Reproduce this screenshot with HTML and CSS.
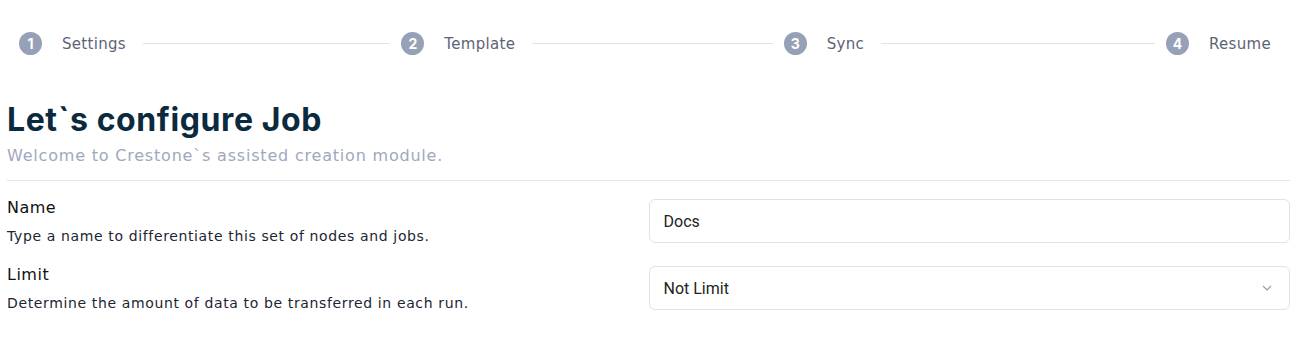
FILE: index.html
```html
<!DOCTYPE html>
<html>
<head>
  <title>Create Job</title>
  <link rel="stylesheet" href="styles.css">
</head>
<body>
  <div class="page">
    <!-- wizard steps -->
    <div class="steps">
      <div class="step">
        <span class="step-num">1</span>
        <span class="step-label">Settings</span>
        <span class="step-line"></span>
      </div>
      <div class="step">
        <span class="step-num">2</span>
        <span class="step-label">Template</span>
        <span class="step-line"></span>
      </div>
      <div class="step">
        <span class="step-num">3</span>
        <span class="step-label">Sync</span>
        <span class="step-line"></span>
      </div>
      <div class="step step-last">
        <span class="step-num">4</span>
        <span class="step-label">Resume</span>
      </div>
    </div>

    <div class="intro">
      <h1 class="title">Let`s configure Job</h1>
      <p class="subtitle">Welcome to Crestone`s assisted creation module.</p>
    </div>

    <div class="form">
      <div class="form-row">
        <div class="field-info">
          <div class="field-label">Name</div>
          <div class="field-desc">Type a name to differentiate this set of nodes and jobs.</div>
        </div>
        <input type="text" class="form-input" value="Docs">
      </div>
      <div class="form-row">
        <div class="field-info">
          <div class="field-label">Limit</div>
          <div class="field-desc">Determine the amount of data to be transferred in each run.</div>
        </div>
        <div class="form-select">
          <span>Not Limit</span>
          <svg class="chevron" width="10" height="6" viewBox="0 0 10 6">
            <path d="M1 1 L5 5 L9 1" fill="none" stroke="#9a9a9a" stroke-width="1.1"/>
          </svg>
        </div>
      </div>
    </div>
  </div>
</body>
</html>
```

FILE: styles.css
```css
/* Job creation wizard */
body {
  margin: 0;
  font-family: "DejaVu Sans", Inter, sans-serif;
  background-color: #ffffff;
  color: #111111;
}
.page {
  padding: 32px 11px 0 7px;
}
.steps {
  display: flex;
  align-items: center;
  padding: 0 19px 0 12px;
}
.step {
  flex: 1;
  display: flex;
  align-items: center;
}
.step-last {
  flex: none;
}
.step-num {
  width: 23px;
  height: 23px;
  border-radius: 50%;
  background-color: #96a1b8;
  color: #ffffff;
  font-family: Inter, sans-serif;
  font-size: 14px;
  font-weight: 700;
  display: flex;
  align-items: center;
  justify-content: center;
}
.step-label {
  margin-left: 20px;
  font-size: 15px;
  letter-spacing: 0.3px;
  color: #5d6377;
}
.step-line {
  flex: 1;
  height: 1px;
  background-color: #e3e3e3;
  margin: 0 11px 0 17px;
}
.intro {
  margin-top: 45px;
  padding-bottom: 12px;
  border-bottom: 1px solid #e4e4e4;
}
.title {
  margin: 0;
  font-family: Inter, sans-serif;
  font-size: 32px;
  font-weight: 700;
  letter-spacing: 0.6px;
  color: #0b2a3e;
  line-height: 40px;
}
.subtitle {
  margin: 4px 0 0 0;
  font-size: 16px;
  letter-spacing: 0.8px;
  color: #a0a8be;
  line-height: 24px;
}
.form {
  padding-top: 15px;
  display: flex;
  flex-direction: column;
  gap: 16px;
}
.form-row {
  display: grid;
  grid-template-columns: 1fr 1fr;
  align-items: start;
}
.field-label {
  font-size: 16px;
  letter-spacing: 0.5px;
  line-height: 24px;
  color: #111111;
}
.field-desc {
  margin-top: 6px;
  font-size: 14px;
  letter-spacing: 0.63px;
  line-height: 21px;
  color: #1c2533;
}
.form-input,
.form-select {
  box-sizing: border-box;
  height: 44px;
  margin-top: 3px;
  border: 1px solid #e2e2e2;
  border-radius: 6px;
  padding: 0 14px;
  font-family: Roboto, sans-serif;
  font-size: 16px;
  color: #222222;
  background: #ffffff;
  outline: none;
}
.form-input {
  width: 100%;
}
.form-select {
  display: flex;
  align-items: center;
  justify-content: space-between;
  padding-right: 17px;
}
```
